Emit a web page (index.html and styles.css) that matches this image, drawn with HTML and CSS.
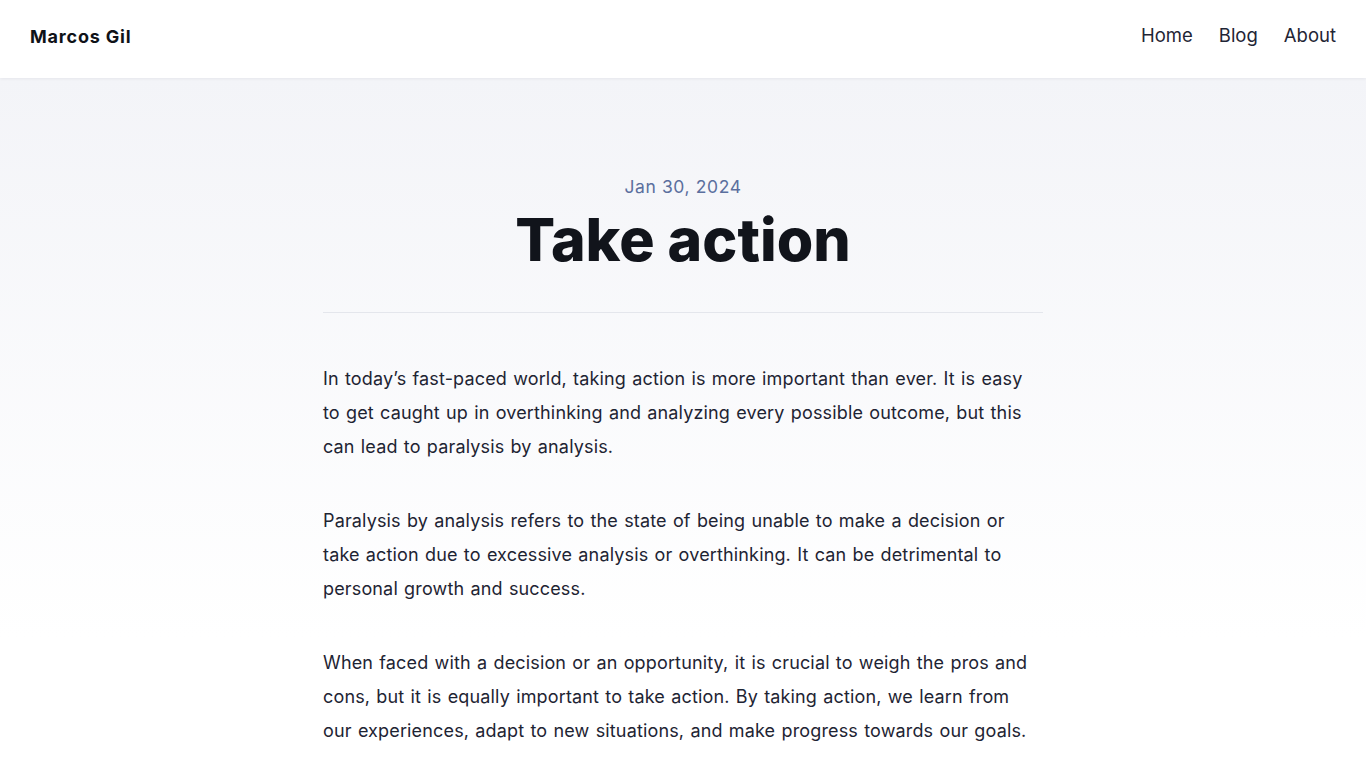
FILE: index.html
```html
<!DOCTYPE html>
<html lang="en">
<head>
<meta charset="utf-8">
<title>Take action — Marcos Gil</title>
<link rel="stylesheet" href="styles.css">
</head>
<body>
<header class="site-header">
  <a class="brand" href="#">Marcos Gil</a>
  <nav class="nav">
    <a href="#">Home</a>
    <a href="#">Blog</a>
    <a href="#">About</a>
  </nav>
</header>
<main class="page">
  <article class="post">
    <header class="post-head">
      <time class="post-date">Jan 30, 2024</time>
      <h1 class="post-title">Take action</h1>
    </header>
    <div class="post-body">
      <p>In today’s fast-paced world, taking action is more important than ever. It is easy to get caught up in overthinking and analyzing every possible outcome, but this can lead to paralysis by analysis.</p>
      <p>Paralysis by analysis refers to the state of being unable to make a decision or take action due to excessive analysis or overthinking. It can be detrimental to personal growth and success.</p>
      <p>When faced with a decision or an opportunity, it is crucial to weigh the pros and cons, but it is equally important to take action. By taking action, we learn from our experiences, adapt to new situations, and make progress towards our goals.</p>
    </div>
  </article>
</main>
</body>
</html>
```
FILE: styles.css
```css
* { box-sizing: border-box; }
html, body { margin: 0; padding: 0; }
body {
  font-family: Inter, "Noto Sans", sans-serif;
  color: #1e2433;
  background: #fff;
}
a { text-decoration: none; color: inherit; }

.site-header {
  height: 78px;
  background: #fff;
  display: flex;
  align-items: center;
  justify-content: space-between;
  padding: 0 30px;
  box-shadow: 0 1px 3px rgba(20, 25, 40, 0.06);
  position: relative;
  z-index: 1;
}
.brand {
  font-weight: 700;
  font-size: 18px;
  color: #0f1218;
  letter-spacing: 0.8px;
  margin-top: -5px;
}
.nav {
  display: flex;
  gap: 26px;
  font-size: 18.5px;
  color: #1f2535;
  margin-top: -8px;
}

.page {
  background: linear-gradient(#f3f4f8 0px, #ffffff 560px);
  min-height: 690px;
  padding-top: 97px;
}
.post {
  width: 720px;
  margin: 0 auto;
}
.post-head {
  text-align: center;
  padding-bottom: 36px;
  border-bottom: 1px solid #e4e6ec;
}
.post-date {
  display: block;
  font-size: 17.5px;
  line-height: 24px;
  letter-spacing: 0.6px;
  color: #5b6f9e;
}
.post-title {
  margin: 5px 0 0;
  font-size: 59px;
  line-height: 72px;
  font-weight: 800;
  letter-spacing: 0;
  color: #11141b;
}
.post-body {
  padding-top: 49px;
  font-size: 18px;
  line-height: 34px;
  letter-spacing: 0.15px;
  word-spacing: 1px;
  color: #1e2433;
}
.post-body p {
  margin: 0 0 40px;
}
```
